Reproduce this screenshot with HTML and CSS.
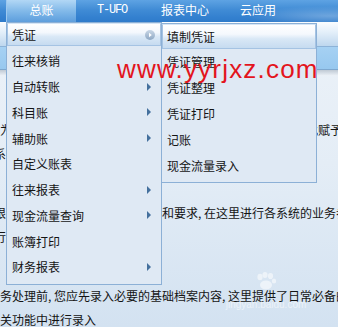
FILE: index.html
```html
<!DOCTYPE html>
<html lang="zh">
<head>
<meta charset="utf-8">
<link rel="stylesheet" href="styles.css">
</head>
<body>
<div class="app">
  <header class="topbar">
    <div class="nav-tab">总账</div>
    <div class="nav-item nav-ufo">T-UFO</div>
    <div class="nav-item nav-rep">报表中心</div>
    <div class="nav-item nav-cloud">云应用</div>
  </header>
  <div class="toolbar"></div>
  <div class="tabstrip"></div>
  <div class="shade"></div>
  <main class="content">
    <div class="para">
      <div class="line">为了使系统能够更好地满足本单位具体的核算需要, 您可在此赋予各项参数相应的值</div>
      <div class="line shift">系统初始化</div>
    </div>
    <div class="para">
      <div class="line shift">根据本单位的实际业务处理特点和要求, 在这里进行各系统的业务参数设置</div>
      <div class="line shift">行设置。</div>
    </div>
    <div class="para">
      <div class="line">务处理前, 您应先录入必要的基础档案内容, 这里提供了日常必备的</div>
      <div class="line">关功能中进行录入</div>
    </div>
  </main>

  <div class="jy">
    <svg class="paw" width="22" height="18" viewBox="0 0 22 18">
      <ellipse cx="5" cy="5" rx="2.6" ry="3.2" fill="#ffffff"/>
      <ellipse cx="10" cy="3" rx="2.6" ry="3" fill="#ffffff"/>
      <ellipse cx="15.5" cy="4" rx="2.6" ry="3.1" fill="#ffffff"/>
      <ellipse cx="19" cy="9" rx="2.2" ry="2.6" fill="#ffffff"/>
      <ellipse cx="11" cy="13" rx="6" ry="4.5" fill="#ffffff"/>
    </svg>
    <div class="jy-text">jingyan.baidu.com</div>
  </div>

  <nav class="menu">
    <div class="mi hot"><span>凭证</span>
      <svg class="sub-icon" width="10" height="10" viewBox="0 0 10 10">
        <defs><linearGradient id="g" x1="0" y1="0" x2="0" y2="1"><stop offset="0" stop-color="#c9d7e6"/><stop offset="1" stop-color="#8ea8c4"/></linearGradient></defs>
        <circle cx="5" cy="5" r="5" fill="url(#g)"/>
        <path d="M4 2.8 L6.8 5 L4 7.2 Z" fill="#ffffff"/>
      </svg>
    </div>
    <div class="mi"><span>往来核销</span></div>
    <div class="mi"><span>自动转账</span><i class="arrow"></i></div>
    <div class="mi"><span>科目账</span><i class="arrow"></i></div>
    <div class="mi"><span>辅助账</span><i class="arrow"></i></div>
    <div class="mi"><span>自定义账表</span></div>
    <div class="mi"><span>往来报表</span><i class="arrow"></i></div>
    <div class="mi"><span>现金流量查询</span><i class="arrow"></i></div>
    <div class="mi"><span>账簿打印</span></div>
    <div class="mi"><span>财务报表</span><i class="arrow"></i></div>
  </nav>

  <nav class="submenu">
    <div class="si hot">填制凭证</div>
    <div class="si">凭证管理</div>
    <div class="si">凭证整理</div>
    <div class="si">凭证打印</div>
    <div class="si">记账</div>
    <div class="si">现金流量录入</div>
  </nav>

  <div class="wm">www.yyrjxz.com</div>
</div>
</body>
</html>
```
FILE: styles.css
```css
html, body {
  margin: 0;
  padding: 0;
}
body {
  width: 338px;
  height: 327px;
  overflow: hidden;
  font-family: "Noto Sans CJK SC", "Noto Sans", sans-serif;
  font-size: 12px;
  color: #141414;
}
.app {
  position: relative;
  width: 338px;
  height: 327px;
  overflow: hidden;
  display: flex;
  flex-direction: column;
  background: linear-gradient(#eef3f9, #e4edf6 50%, #d3e2f1);
}

/* top bar */
.topbar {
  height: 22px;
  flex: none;
  display: flex;
  align-items: stretch;
  padding-left: 6px;
  background:
    radial-gradient(ellipse 120px 14px at 330px 16px, rgba(255,255,255,0.28), rgba(255,255,255,0) 70%),
    linear-gradient(#5ea3e3, #408bd5 45%, #3380cf 80%, #2f7bca);
  color: #ffffff;
  line-height: 20px;
}
.nav-tab {
  width: 70px;
  text-align: center;
  background: linear-gradient(#b2d7f5, #86bcea 45%, #6ba9e2 80%, #5e9edb);
  border-left: 1px solid #9cc8ef;
  box-sizing: border-box;
}
.nav-item {
  white-space: nowrap;
}
.nav-ufo {
  margin-left: 21px;
  font-family: "Liberation Mono", monospace;
  font-size: 12px;
  letter-spacing: -1.2px;
}
.nav-rep {
  margin-left: 34px;
}
.nav-cloud {
  margin-left: 31px;
}

/* underlying page bands */
.toolbar {
  height: 24px;
  flex: none;
  background: linear-gradient(#fbfdff, #e2eef9 45%, #bed7ee);
  border-bottom: 1px solid #8db3d8;
}
.tabstrip {
  height: 22px;
  flex: none;
  background: linear-gradient(#a6d1f3, #97c8ef);
  border-bottom: 1px solid #7ea8cf;
}
.shade {
  height: 6px;
  flex: none;
  background: linear-gradient(#bfc9d4, #eef3f9);
}
.content {
  flex: 1;
  padding-top: 42px;
  overflow: hidden;
}
.para {
  margin-bottom: 35px;
}
.line {
  height: 24px;
  line-height: 24px;
  white-space: nowrap;
}
.line.shift {
  margin-left: -6px;
}

/* baidu watermark */
.jy {
  position: absolute;
  left: 220px;
  top: 272px;
  width: 92px;
  display: flex;
  flex-direction: column;
  align-items: center;
  opacity: 0.55;
}
.jy-text {
  font-family: "Liberation Sans", sans-serif;
  font-size: 10px;
  line-height: 12px;
  color: #ffffff;
  margin-top: 9px;
}

/* main menu */
.menu {
  position: absolute;
  left: 6px;
  top: 22px;
  width: 156px;
  box-sizing: border-box;
  border: 1px solid #8cb0d6;
  background: #dfe9f4;
  padding-bottom: 4px;
  display: flex;
  flex-direction: column;
}
.mi {
  height: 25.75px;
  display: flex;
  align-items: center;
  justify-content: space-between;
  padding: 0 10px 0 5px;
  white-space: nowrap;
}
.mi.hot {
  height: 23px;
  box-sizing: border-box;
  margin: 0 0 2px;
  padding: 0 5px 0 4px;
  border: 1px solid #a5c3e3;
  border-top-color: #d6e6f6;
  background: linear-gradient(#ffffff, #f4f8fd 40%, #d9e8f6 60%, #c6dbf0);
}
.sub-icon {
  display: block;
}
.arrow {
  width: 0;
  height: 0;
  border-left: 4px solid #44709d;
  border-top: 4px solid transparent;
  border-bottom: 4px solid transparent;
}

/* sub menu */
.submenu {
  position: absolute;
  left: 161px;
  top: 23px;
  width: 156px;
  box-sizing: border-box;
  border: 1px solid #8cb0d6;
  background: #dfe9f4;
  padding-bottom: 3px;
  display: flex;
  flex-direction: column;
}
.si {
  height: 26px;
  line-height: 26px;
  padding-left: 5px;
  white-space: nowrap;
}
.si.hot {
  height: 25px;
  line-height: 23px;
  box-sizing: border-box;
  padding-left: 4px;
  border: 1px solid #a5c3e3;
  border-top-color: #d6e6f6;
  background: linear-gradient(#ffffff, #f4f8fd 40%, #d9e8f6 60%, #c6dbf0);
}

/* red site watermark */
.wm {
  position: absolute;
  left: 117px;
  top: 56px;
  font-family: "Liberation Sans", sans-serif;
  font-size: 26px;
  line-height: 26px;
  letter-spacing: 1.2px;
  color: #e3151d;
  white-space: nowrap;
  z-index: 5;
}
```
